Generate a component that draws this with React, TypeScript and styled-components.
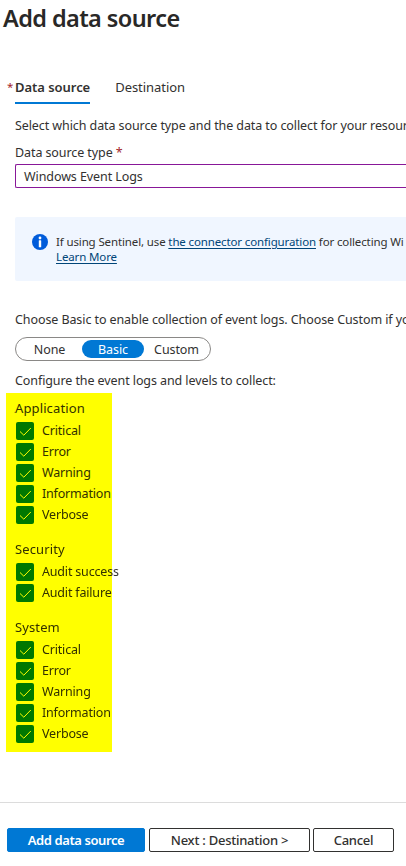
import React from "react";
import styled, { createGlobalStyle } from "styled-components";

const GlobalStyle = createGlobalStyle`
  * { box-sizing: border-box; }
  body { margin: 0; background: #fff; overflow: hidden; }
`;

const Page = styled.main`
  width: 100%;
  height: 866px;
  overflow: hidden;
  display: flex;
  flex-direction: column;
  background: #fff;
  color: #323130;
  font-family: "Noto Sans", "Open Sans", sans-serif;
  font-size: 12.5px;
  line-height: 20px;
  letter-spacing: -0.09px;
  white-space: nowrap;
`;

const Title = styled.h1`
  margin: 2px 0 0 3px;
  height: 32px;
  font-size: 23.5px;
  line-height: 32px;
  font-weight: 600;
  letter-spacing: -0.6px;
  color: #292827;
`;

const Tabs = styled.nav`
  display: flex;
  margin-top: 43px;
  padding-left: 7px;
  height: 27px;
`;

const TabMark = styled.span`
  width: 8px;
  font-size: 11.5px;
  color: #a4262c;
`;

const Tab = styled.a<{ $active?: boolean }>`
  height: 27px;
  margin-right: 25px;
  font-size: 13px;
  font-weight: ${(p) => (p.$active ? 600 : 400)};
  letter-spacing: -0.04px;
  border-bottom: 2px solid ${(p) => (p.$active ? "#0078d4" : "transparent")};
`;

const Line = styled.p<{ $top: number }>`
  margin: ${(p) => p.$top}px 0 0 15px;
  height: 20px;
`;

const Required = styled.span`
  color: #a4262c;
`;

const Field = styled.div`
  margin: 1px 0 0 15px;
  height: 24px;
  flex: none;
  padding-left: 8px;
  line-height: 24px;
  border: 1px solid #881798;
  border-right: 0;
  border-radius: 2px 0 0 2px;
`;

const Info = styled.section`
  display: flex;
  flex: none;
  gap: 8px;
  margin: 29px 0 0 15px;
  height: 64px;
  padding: 17px 0 0 17px;
  background: #f0f6ff;
  border-radius: 2px 0 0 2px;
  font-size: 11.5px;
  line-height: 15px;
  letter-spacing: -0.13px;

  svg { flex: none; }
`;

const Link = styled.a`
  color: #004578;
  text-decoration: underline;
  text-underline-offset: 2px;
`;

const Segments = styled.div`
  display: flex;
  align-items: center;
  flex: none;
  margin: 7px 0 0 15px;
  width: 196px;
  height: 24px;
  padding: 0 1px;
  border: 1px solid #8a8886;
  border-radius: 12px;
`;

const Segment = styled.span<{ $width: number; $active?: boolean }>`
  width: ${(p) => p.$width}px;
  height: 18px;
  line-height: 19px;
  text-align: center;
  border-radius: 9px;
  color: ${(p) => (p.$active ? "#fff" : "inherit")};
  background: ${(p) => (p.$active ? "#0078d4" : "transparent")};
`;

const Events = styled.div`
  position: relative;
  isolation: isolate;
  display: flex;
  flex-direction: column;
  gap: 14px;
  flex: none;
  height: 359px;
  margin: 2px 0 0 6px;
  padding: 5px 0 0 9px;
`;

const Highlight = styled.div`
  position: absolute;
  inset: 0 auto 0 0;
  width: 106px;
  background: #ff0;
  mix-blend-mode: multiply;
`;

const Group = styled.div`
  background: #fff;
`;

const GroupName = styled.div`
  height: 22px;
  font-size: 13px;
  letter-spacing: 0.12px;
`;

const CheckRow = styled.label`
  display: flex;
  align-items: center;
  gap: 8px;
  height: 21px;
  padding-left: 1px;
`;

const Box = styled.span`
  width: 18px;
  height: 18px;
  border-radius: 2px;
  background: #0078d4;
  display: flex;
`;

const CheckText = styled.span`
  letter-spacing: -0.18px;
`;

const Footer = styled.footer`
  display: flex;
  flex: none;
  margin-top: 50px;
  padding: 25px 0 0 7px;
  border-top: 1px solid #dcdcdc;
`;

const Button = styled.button<{ $width: number; $gap?: number; $primary?: boolean }>`
  width: ${(p) => p.$width}px;
  height: 24px;
  margin: 0 ${(p) => p.$gap ?? 0}px 0 0;
  padding: 0;
  font: ${(p) => (p.$primary ? 600 : 500)} 13px / 21px "Noto Sans", sans-serif;
  letter-spacing: ${(p) => (p.$primary ? -0.4 : -0.25)}px;
  color: ${(p) => (p.$primary ? "#fff" : "#323130")};
  background: ${(p) => (p.$primary ? "#0078d4" : "#fff")};
  border: 1px solid ${(p) => (p.$primary ? "#0078d4" : "#323130")};
  border-radius: 2px;
`;

const groups = [
  { name: "Application", items: ["Critical", "Error", "Warning", "Information", "Verbose"] },
  { name: "Security", items: ["Audit success", "Audit failure"] },
  { name: "System", items: ["Critical", "Error", "Warning", "Information", "Verbose"] },
];

const Check = () => (
  <svg width="18" height="18" viewBox="0 0 18 18" fill="none" stroke="#fff" strokeWidth="1">
    <path d="M4 9.5 7.8 13.2 14.8 6" />
  </svg>
);

const InfoIcon = () => (
  <svg width="16" height="16" viewBox="0 0 16 16">
    <circle cx="8" cy="8" r="8" fill="#015cda" />
    <circle cx="8" cy="4" r="1.4" fill="#fff" />
    <rect x="6.8" y="6.3" width="2.4" height="7" rx=".4" fill="#fff" />
  </svg>
);

export default function App() {
  return (
    <Page>
      <GlobalStyle />
      <Title>Add data source</Title>
      <Tabs>
        <TabMark>*</TabMark>
        <Tab $active>Data source</Tab>
        <Tab>Destination</Tab>
      </Tabs>
      <Line $top={12}>Select which data source type and the data to collect for your resour</Line>
      <Line $top={7}>
        Data source type <Required>*</Required>
      </Line>
      <Field>Windows Event Logs</Field>
      <Info>
        <InfoIcon />
        <div>
          If using Sentinel, use <Link>the connector configuration</Link> for collecting Wi
          <br />
          <Link>Learn More</Link>
        </div>
      </Info>
      <Line $top={29}>Choose Basic to enable collection of event logs. Choose Custom if yo</Line>
      <Segments>
        <Segment $width={65}>None</Segment>
        <Segment $width={62} $active>Basic</Segment>
        <Segment $width={65}>Custom</Segment>
      </Segments>
      <Line $top={10}>Configure the event logs and levels to collect:</Line>
      <Events>
        {groups.map((g) => (
          <Group key={g.name}>
            <GroupName>{g.name}</GroupName>
            {g.items.map((item) => (
              <CheckRow key={item}>
                <Box>
                  <Check />
                </Box>
                <CheckText>{item}</CheckText>
              </CheckRow>
            ))}
          </Group>
        ))}
        <Highlight />
      </Events>
      <Footer>
        <Button $width={138} $gap={4} $primary>Add data source</Button>
        <Button $width={161} $gap={3}>Next : Destination &gt;</Button>
        <Button $width={81}>Cancel</Button>
      </Footer>
    </Page>
  );
}
